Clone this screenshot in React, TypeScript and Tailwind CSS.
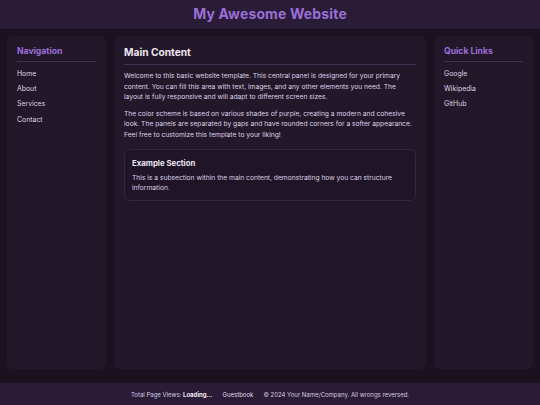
// App.tsx
import React from "react";

// ─── Data ─────────────────────────────────────────────────────────────────────

const NAV = ["Home", "About", "Services", "Contact"] as const;
const LINKS = ["Google", "Wikipedia", "GitHub"] as const;

// ─── Side panel ───────────────────────────────────────────────────────────────

function SidePanel({ title, items }: { title: string; items: readonly string[] }) {
  return (
    <aside className="w-[99px] flex-shrink-0 rounded-md bg-[#221829] px-[10px] pt-[9px]">
      <h2 className="text-[8.6px] font-bold leading-[12px] text-[#9d6fdc] pb-[4px] border-b border-[#41304f]">
        {title}
      </h2>
      <ul className="mt-[4px] flex flex-col">
        {items.map((item) => (
          <li key={item} className="text-[6.9px] leading-[15.2px] text-[#ddd3e6]">
            {item}
          </li>
        ))}
      </ul>
    </aside>
  );
}

// ─── App ──────────────────────────────────────────────────────────────────────

export default function App() {
  return (
    <div
      className="w-[540px] h-[405px] flex flex-col bg-[#1b1220] overflow-hidden"
      style={{ fontFamily: "Inter, 'Noto Sans', sans-serif" }}>
      {/* Header */}
      <header className="h-[29px] flex-shrink-0 flex items-center justify-center bg-[#2a1b37]">
        <h1 className="text-[13.9px] font-bold tracking-[0.2px] text-[#9a70d8]">
          My Awesome Website
        </h1>
      </header>

      {/* Panels */}
      <main className="flex-1 flex gap-[8px] px-[7px] pt-[7px] pb-[14px]">
        <SidePanel title="Navigation" items={NAV} />

        <section className="flex-1 rounded-md bg-[#221829] px-[10px] pt-[9px]">
          <h2 className="text-[10.2px] font-bold leading-[14px] text-[#ece4f2] pb-[5px] border-b border-[#41304f]">
            Main Content
          </h2>
          <p className="mt-[6px] text-[6.7px] leading-[10.6px] text-[#ddd3e6]">
            Welcome to this basic website template. This central panel is designed for your primary
            content. You can fill this area with text, images, and any other elements you need. The
            layout is fully responsive and will adapt to different screen sizes.
          </p>
          <p className="mt-[6px] text-[6.7px] leading-[10.6px] text-[#ddd3e6]">
            The color scheme is based on various shades of purple, creating a modern and cohesive
            look. The panels are separated by gaps and have rounded corners for a softer appearance.
            Feel free to customize this template to your liking!
          </p>

          {/* Example section */}
          <div className="mt-[8px] rounded-md border border-[#33263f] bg-[#1f1526] px-[7px] pt-[8px] pb-[6px]">
            <h3 className="text-[7.8px] font-bold leading-[11px] text-[#ece4f2]">
              Example Section
            </h3>
            <p className="mt-[4px] text-[6.7px] leading-[10.6px] text-[#ddd3e6]">
              This is a subsection within the main content, demonstrating how you can structure
              information.
            </p>
          </div>
        </section>

        <SidePanel title="Quick Links" items={LINKS} />
      </main>

      {/* Footer */}
      <footer className="h-[22px] flex-shrink-0 flex items-center justify-center gap-[10px] bg-[#2a1b37] text-[6px] text-[#d6cce0]">
        <span>
          Total Page Views: <span className="font-bold text-[#f0eaf5]">Loading...</span>
        </span>
        <span className="text-[#e4dcec]">Guestbook</span>
        <span>© 2024 Your Name/Company. All wrongs reversed.</span>
      </footer>
    </div>
  );
}
